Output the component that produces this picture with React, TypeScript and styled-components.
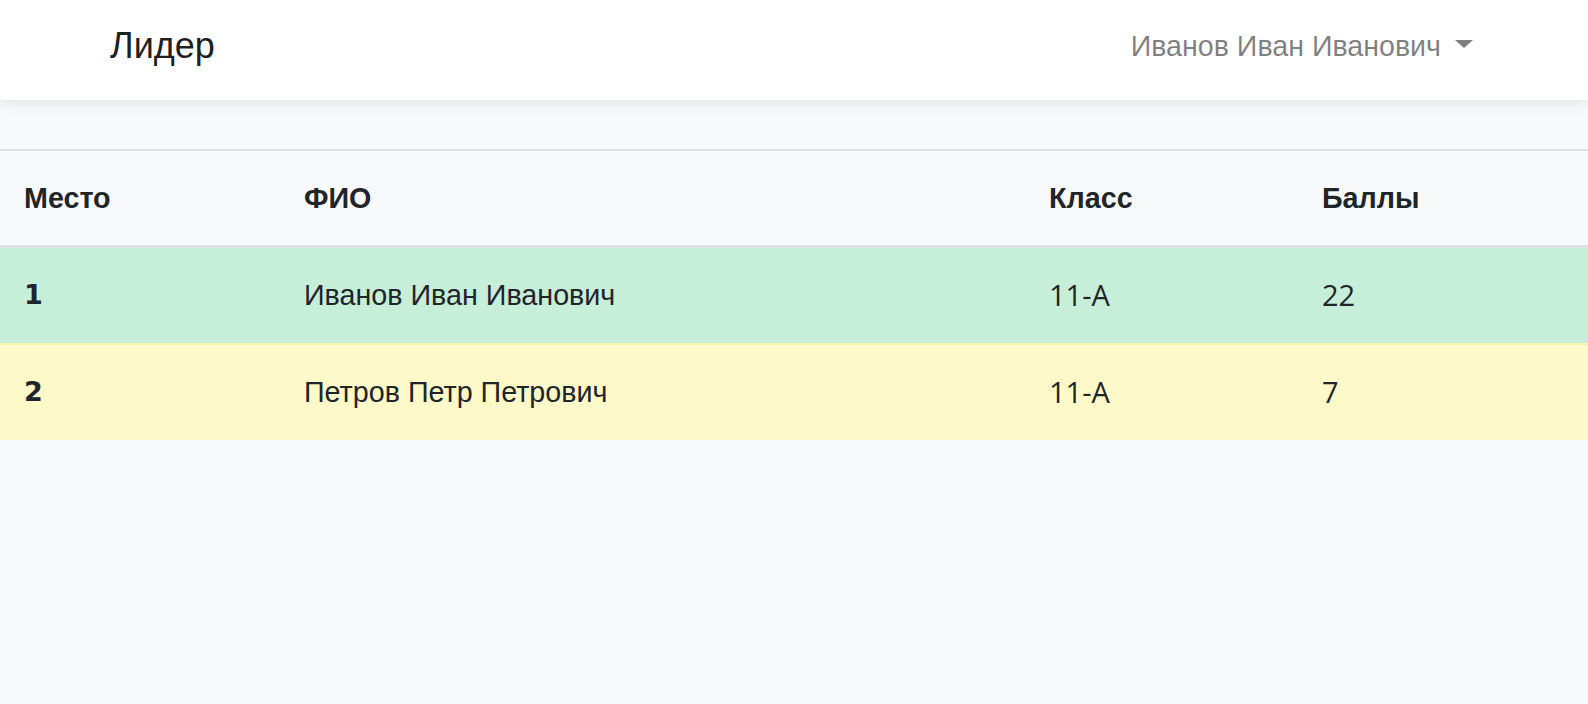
import React from "react";
import styled, { createGlobalStyle } from "styled-components";

const GlobalStyle = createGlobalStyle`
  html, body {
    margin: 0;
    padding: 0;
    background: #f8f9fa;
    font-family: "Liberation Sans", Arial, sans-serif;
    color: #212529;
  }
`;

const Page = styled.div`
  min-height: 704px;
  background: #f8f9fa;
`;

const NavBar = styled.header`
  box-sizing: border-box;
  height: 100px;
  background: #ffffff;
  box-shadow: 0 4px 12px rgba(0, 0, 0, 0.08);
  display: flex;
  align-items: center;
  justify-content: space-between;
  padding: 0 115px 8px 110px;
  position: relative;
  z-index: 1;
`;

const Brand = styled.a`
  font-size: 36px;
  color: rgba(0, 0, 0, 0.9);
  text-decoration: none;
  line-height: 1.5;
`;

const UserMenu = styled.button`
  display: flex;
  align-items: center;
  gap: 14px;
  border: 0;
  background: none;
  padding: 0;
  font-family: inherit;
  font-size: 28.6px;
  color: rgba(0, 0, 0, 0.5);
  cursor: pointer;
`;

const Caret = styled.span`
  display: inline-block;
  width: 0;
  height: 0;
  border-left: 9px solid transparent;
  border-right: 9px solid transparent;
  border-top: 8.5px solid rgba(0, 0, 0, 0.5);
  margin-top: -4px;
`;

const Content = styled.main`
  padding-top: 49px;
`;

const Table = styled.table`
  width: 100%;
  border-collapse: collapse;
  table-layout: fixed;
  font-size: 28.7px;
  line-height: 42px;
`;

const HeadCell = styled.th<{ $w?: number }>`
  box-sizing: border-box;
  ${(p) => (p.$w ? `width: ${p.$w}px;` : "")}
  text-align: left;
  font-weight: 700;
  padding: 26px 24px 26px 24px;
  border-top: 2px solid #dee2e6;
  border-bottom: 3px solid #dee2e6;
  background: #f8f9fa;
`;

const Row = styled.tr<{ $tone: "success" | "warning" }>`
  background: ${(p) => (p.$tone === "success" ? "#c6eed9" : "#fef9c9")};
  border-top: ${(p) => (p.$tone === "warning" ? "2px solid #fcf2a9" : "0")};
`;

const Cell = styled.td<{ $kind?: "rank" | "text" | "num" }>`
  padding: 26px 24px 27px 24px;
  font-weight: ${(p) => (p.$kind === "rank" ? 700 : 400)};
  font-family: ${(p) =>
    p.$kind === "rank"
      ? `"DejaVu Sans", sans-serif`
      : p.$kind === "num"
      ? `"Open Sans", sans-serif`
      : `"Liberation Sans", Arial, sans-serif`};
  font-size: ${(p) => (p.$kind === "rank" ? "27px" : p.$kind === "num" ? "29px" : "28.7px")};
`;

const rows = [
  { place: 1, name: "Иванов Иван Иванович", cls: "11-A", score: 22, tone: "success" as const },
  { place: 2, name: "Петров Петр Петрович", cls: "11-A", score: 7, tone: "warning" as const },
];

export default function App() {
  return (
    <Page>
      <GlobalStyle />
      <NavBar>
        <Brand href="#">Лидер</Brand>
        <UserMenu type="button">
          Иванов Иван Иванович
          <Caret />
        </UserMenu>
      </NavBar>
      <Content>
        <Table>
          <thead>
            <tr>
              <HeadCell $w={280}>Место</HeadCell>
              <HeadCell $w={745}>ФИО</HeadCell>
              <HeadCell $w={273}>Класс</HeadCell>
              <HeadCell>Баллы</HeadCell>
            </tr>
          </thead>
          <tbody>
            {rows.map((r) => (
              <Row key={r.place} $tone={r.tone}>
                <Cell $kind="rank">{r.place}</Cell>
                <Cell $kind="text">{r.name}</Cell>
                <Cell $kind="num">{r.cls}</Cell>
                <Cell $kind="num">{r.score}</Cell>
              </Row>
            ))}
          </tbody>
        </Table>
      </Content>
    </Page>
  );
}
